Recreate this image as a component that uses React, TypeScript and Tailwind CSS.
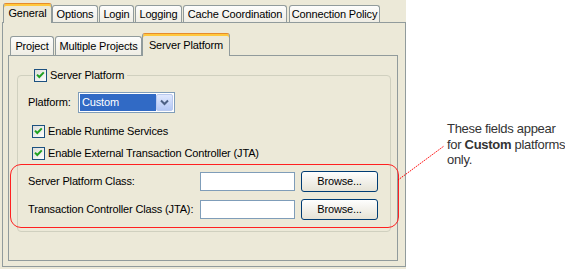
import React from "react";

const Check = () => (
  <svg width="13" height="13" viewBox="0 0 13 13" className="shrink-0">
    <defs>
      <linearGradient id="cbg" x1="0" y1="0" x2="1" y2="1">
        <stop offset="0" stopColor="#dcdcd7" />
        <stop offset="1" stopColor="#ffffff" />
      </linearGradient>
    </defs>
    <rect x="0.5" y="0.5" width="12" height="12" fill="url(#cbg)" stroke="#1c5180" />
    <path d="M3 5.6 L5.3 8 L9.8 3.4" fill="none" stroke="#21a121" strokeWidth="2" />
  </svg>
);

function Tab({ label, cls, active }: { label: string; cls: string; active?: boolean }) {
  if (active) {
    return (
      <div
        className={`${cls} relative z-10 -mb-px flex items-center justify-center rounded-t-[3px] border border-b-0 border-[#919b9c] border-t-[#e68b2c] bg-[#ece9d8] shadow-[inset_0_2px_0_#ffc83c]`}
      >
        {label}
      </div>
    );
  }
  return (
    <div
      className={`${cls} flex items-center justify-center rounded-t-[3px] border border-b-0 border-[#919b9c] bg-gradient-to-b from-[#fdfdfc] to-[#efede4]`}
    >
      {label}
    </div>
  );
}

function BrowseButton() {
  return (
    <button className="ml-[6px] flex h-[21px] w-[77px] items-center justify-center rounded-[3px] border border-[#003c74] bg-gradient-to-b from-[#fefefe] to-[#e6e3d6]">
      Browse...
    </button>
  );
}

export default function App() {
  return (
    <div className="relative flex h-[269px] w-[565px] bg-white font-['Liberation_Sans',Arial,sans-serif] text-[11px] tracking-[-0.15px] text-black">
      {/* dialog area */}
      <div className="h-full w-[406px] shrink-0 bg-[#ece9d8] pl-[2px] pt-[3px]">
        <div className="flex h-[19px] items-end">
          <Tab label="General" cls="ml-[1px] h-[20px] w-[49px]" active />
          <Tab label="Options" cls="h-[17px] w-[46px]" />
          <Tab label="Login" cls="ml-[1px] h-[17px] w-[35px]" />
          <Tab label="Logging" cls="ml-[1px] h-[17px] w-[47px]" />
          <Tab label="Cache Coordination" cls="ml-[1px] h-[17px] w-[104px]" />
          <Tab label="Connection Policy" cls="ml-[2px] h-[17px] w-[91px]" />
        </div>

        <div className="h-[245px] w-[404px] border border-[#919b9c] pl-[5px] pt-[10px]">
          <div className="flex h-[22px] items-end">
            <Tab label="Project" cls="ml-[2px] h-[19px] w-[44px]" />
            <Tab label="Multiple Projects" cls="ml-[1px] h-[19px] w-[87px]" />
            <Tab label="Server Platform" cls="h-[23px] w-[88px]" active />
          </div>

          <div className="h-[206px] w-[390px] border border-[#919b9c]">
            <fieldset className="ml-[8px] mt-[13px] w-[374px] rounded-[4px] border border-[#d0d0bf] pb-[11px] pl-[10px]">
              <legend className="ml-[5px] px-[1px]">
                <span className="flex h-[13px] items-center gap-[3px] pr-[2px]">
                  <Check />
                  Server Platform
                </span>
              </legend>

              <div className="mt-[10px] flex h-[21px] items-center">
                <span className="w-[50px]">Platform:</span>
                <div className="flex h-[21px] w-[97px] border border-[#7f9db9] bg-white p-[1px]">
                  <div className="flex flex-1 items-center bg-[#316ac5] pl-[2px] text-white">Custom</div>
                  <div className="flex w-[17px] items-center justify-center rounded-[2px] border border-[#b9c9ef] bg-gradient-to-b from-[#e0e8fd] to-[#b4c8f6]">
                    <svg width="9" height="7" viewBox="0 0 9 7">
                      <path d="M1 1.5 L4.5 5 L8 1.5" fill="none" stroke="#4d6185" strokeWidth="2" />
                    </svg>
                  </div>
                </div>
              </div>

              <div className="mt-[12px] flex h-[13px] items-center gap-[3px] pl-[4px]">
                <Check />
                Enable Runtime Services
              </div>
              <div className="mt-[9px] flex h-[13px] items-center gap-[3px] pl-[4px]">
                <Check />
                Enable External Transaction Controller (JTA)
              </div>

              <div className="mt-[11px] flex h-[21px] items-center">
                <span className="w-[172px]">Server Platform Class:</span>
                <div className="h-[19px] w-[95px] border border-[#7f9db9] bg-white" />
                <BrowseButton />
              </div>
              <div className="mt-[7px] flex h-[21px] items-center">
                <span className="w-[172px]">Transaction Controller Class (JTA):</span>
                <div className="h-[19px] w-[95px] border border-[#7f9db9] bg-white" />
                <BrowseButton />
              </div>
            </fieldset>
          </div>
        </div>
      </div>

      {/* annotation */}
      <div className="min-w-0 flex-1 whitespace-nowrap pl-[41px] pt-[121px] text-[13px] leading-[15.5px] tracking-[-0.3px] text-[#333333]">
        These fields appear
        <br />
        for <b>Custom</b> platforms
        <br />
        only.
      </div>

      {/* callout overlay */}
      <div className="pointer-events-none absolute left-[10px] top-[164px] h-[64px] w-[389px] rounded-[11px] border-[1.5px] border-[#ff2020]" />
      <svg className="pointer-events-none absolute left-0 top-0" width="565" height="269">
        <line x1="398" y1="180" x2="444" y2="146" stroke="#ff0000" strokeWidth="1" strokeDasharray="1.5 1" />
      </svg>
    </div>
  );
}
